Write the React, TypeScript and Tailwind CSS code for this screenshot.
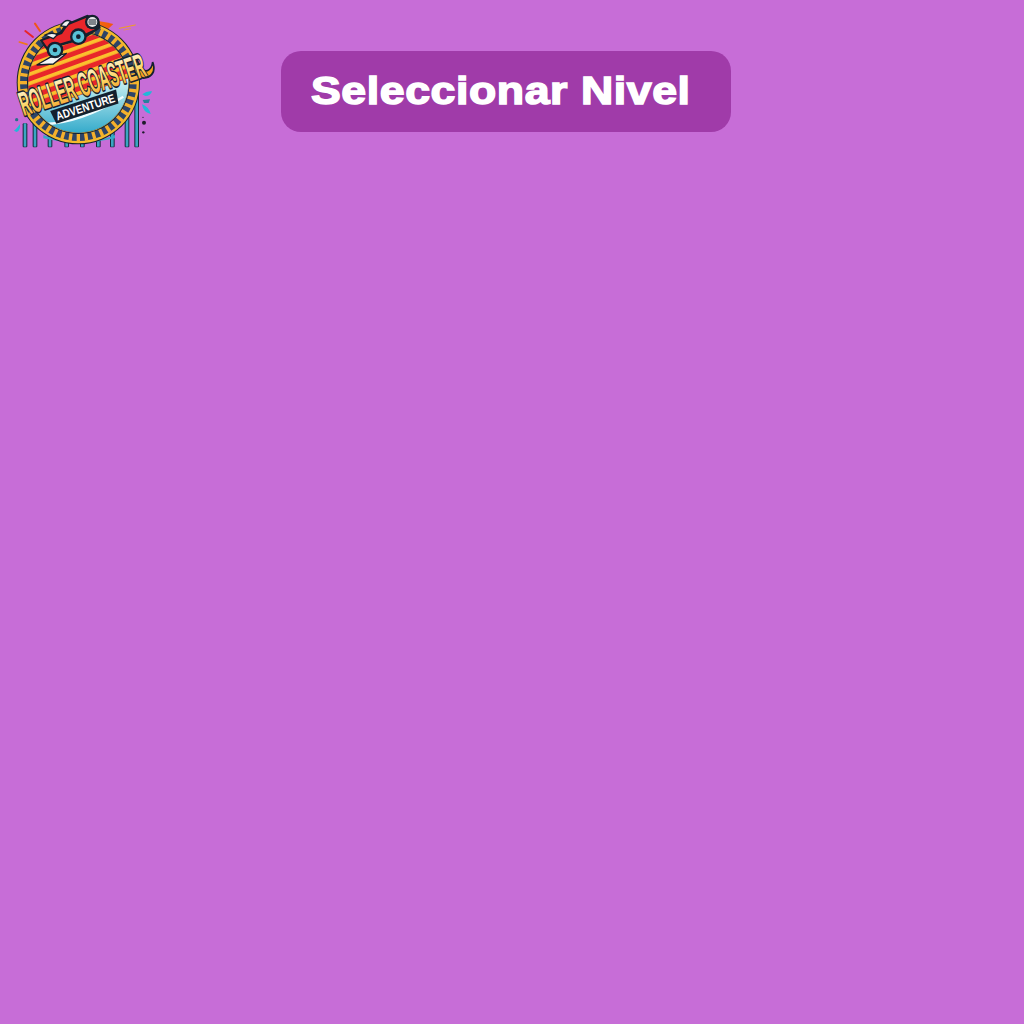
import React from "react";

const ties = Array.from({ length: 44 }, (_, i) => (i * 360) / 44);
const posts = [75, 105, 150, 200, 247, 295, 337, 381, 410];

const Logo = () => (
  <svg viewBox="0 0 570 480" className="w-[190px] h-[160px] shrink-0">
    <defs>
      <linearGradient id="sun" x1="0" y1="0" x2="1" y2="0">
        <stop offset="0" stopColor="#f7a80e" />
        <stop offset="1" stopColor="#f2560f" />
      </linearGradient>
      <linearGradient id="letters" x1="0" y1="0" x2="0" y2="1">
        <stop offset="0" stopColor="#fffbe8" />
        <stop offset="0.6" stopColor="#fdd35e" />
        <stop offset="1" stopColor="#ee8f1f" />
      </linearGradient>
      <linearGradient id="water" x1="0" y1="0" x2="0" y2="1">
        <stop offset="0" stopColor="#d5f5f6" />
        <stop offset="1" stopColor="#2aa6c8" />
      </linearGradient>
      <clipPath id="inner">
        <circle cx="235" cy="248" r="150" />
      </clipPath>
      <pattern id="stripes" width="30" height="26" patternUnits="userSpaceOnUse" patternTransform="rotate(-20)">
        <rect width="30" height="26" fill="#e8262a" />
        <rect width="30" height="11" fill="#fbc02d" />
      </pattern>
    </defs>

    {/* sun behind the car */}
    <path d="M125 115 C165 65 235 45 340 72 L300 110 L150 140 Z" fill="url(#sun)" />

    {/* sparks */}
    <g strokeLinecap="round" fill="none">
      <path d="M76 93 L99 111" stroke="#e8262a" strokeWidth="6" />
      <path d="M105 71 L120 93" stroke="#f0561a" strokeWidth="6" />
      <path d="M58 126 L81 133" stroke="#f0761a" strokeWidth="5" />
      <path d="M358 85 L406 75" stroke="#f2a01a" strokeWidth="3" />
      <path d="M372 90 L392 86" stroke="#f2a01a" strokeWidth="2" />
    </g>
    <g fill="#22b8d8">
      <path d="M427 283 Q440 272 456 274 Q452 288 436 288 Z" />
      <path d="M428 300 L450 298 L446 309 L432 309 Z" fill="#2a7f9c" />
      <path d="M426 313 Q446 320 452 342 Q430 338 426 313 Z" />
      <path d="M42 392 Q52 384 60 372 Q62 392 50 396 Z" />
    </g>
    <circle cx="432" cy="368" r="6" fill="#1c1c2a" />
    <circle cx="430" cy="397" r="3.5" fill="#1c1c2a" />
    <circle cx="429" cy="352" r="2" fill="#1c1c2a" />
    <circle cx="50" cy="359" r="5" fill="#2a6f8c" />

    {/* support posts */}
    {posts.map((x) => (
      <g key={x}>
        <rect x={x - 7} y={x > 330 ? 250 : 370} width="14" height={x > 330 ? 192 : 72} rx="3" fill="#14283a" />
        <rect x={x - 4} y={x > 330 ? 250 : 370} width="8" height={x > 330 ? 190 : 70} fill="#3aa6c2" />
      </g>
    ))}
    <path d="M130 405 Q235 450 345 405 L345 415 Q235 440 130 415 Z" fill="#35a9c6" />

    {/* outer rail and ties */}
    <circle cx="235" cy="248" r="185" fill="#14202e" />
    <circle cx="235" cy="248" r="182" fill="#f5bb2c" />
    <circle cx="235" cy="248" r="175" fill="#2d4468" />
    {ties.map((a) => (
      <rect key={a} x="230" y="72" width="10" height="26" fill="#f5b02c" transform={`rotate(${a} 235 248)`} />
    ))}
    <circle cx="235" cy="248" r="154" fill="#14202e" />
    <circle cx="235" cy="248" r="151" fill="#f5bb2c" />
    <circle cx="235" cy="248" r="146" fill="#14202e" />

    {/* inside of the ring */}
    <g clipPath="url(#inner)">
      <rect x="80" y="90" width="320" height="310" fill="#1c3a6e" />
      <path d="M70 100 L400 60 L400 230 L70 345 Z" fill="url(#stripes)" />
      <path d="M70 345 L400 230 L400 410 L70 410 Z" fill="url(#water)" />
      <path d="M130 372 Q240 370 370 290" stroke="#effcff" strokeWidth="7" fill="none" />
    </g>

    {/* car */}
    <path d="M118 120 L180 95 L196 72 L262 44 L296 56 L302 84 L262 110 L215 128 L140 150 Z" fill="#14202e" />
    <path d="M128 122 L186 102 L204 76 L258 54 L284 88 L215 120 L142 142 Z" fill="#e8262a" />
    <path d="M182 78 Q196 55 212 64 L200 80 Z" fill="#f2f2f2" stroke="#14202e" strokeWidth="4" />
    <path d="M135 105 Q155 95 172 104 L160 116 Z" fill="#f2f2f2" stroke="#14202e" strokeWidth="4" />
    <circle cx="277" cy="66" r="22" fill="#14202e" />
    <circle cx="277" cy="66" r="15" fill="#e7e7e7" />
    <path d="M266 60 L288 60 M265 66 L289 66 M266 72 L288 72" stroke="#14202e" strokeWidth="3" />
    <path d="M110 195 L150 172 L200 160 L160 192 Z" fill="#f4f4f4" stroke="#14202e" strokeWidth="4" />
    {[
      [165, 150],
      [235, 110],
    ].map(([cx, cy]) => (
      <g key={cx}>
        <circle cx={cx} cy={cy} r="25" fill="#14202e" />
        <circle cx={cx} cy={cy} r="18" fill="#58c3d6" />
        <circle cx={cx} cy={cy} r="7" fill="#14202e" />
      </g>
    ))}

    {/* title swoosh */}
    <path d="M412 180 Q420 216 442 212 Q456 206 458 186 Q470 218 444 232 Q414 242 400 205 Z" fill="#f5a11d" stroke="#14202e" strokeWidth="5" />

    {/* lettering */}
    <g transform="rotate(-18 250 245)" fontFamily="'Liberation Sans', Arial, sans-serif" fontWeight="700">
      <text
        x="48"
        y="288"
        fontSize="102"
        textLength="392"
        lengthAdjust="spacingAndGlyphs"
        fill="url(#letters)"
        stroke="#14202e"
        strokeWidth="10"
        strokeLinejoin="round"
        style={{ paintOrder: "stroke" }}
      >
        ROLLER COASTER
      </text>
      <path d="M128 298 L336 298 L330 340 L134 340 Z" fill="#14202e" />
      <text x="140" y="332" fontSize="36" textLength="184" lengthAdjust="spacingAndGlyphs" fill="#ffffff">
        ADVENTURE
      </text>
    </g>
  </svg>
);

export default function App() {
  return (
    <div className="min-h-screen bg-[#c76dd7] font-['Liberation_Sans',Arial,sans-serif]">
      <header className="flex items-start">
        <Logo />
        <button className="mt-[51px] ml-[91px] flex h-[81px] w-[450px] items-center rounded-[20px] bg-[#a03ba9] pb-[2px] pl-[30px] text-[39px] font-bold leading-none tracking-[0.5px] text-white [-webkit-text-stroke:1.5px_white]">
          <span className="inline-block origin-left scale-x-[1.145]">Seleccionar Nivel</span>
        </button>
      </header>
    </div>
  );
}
